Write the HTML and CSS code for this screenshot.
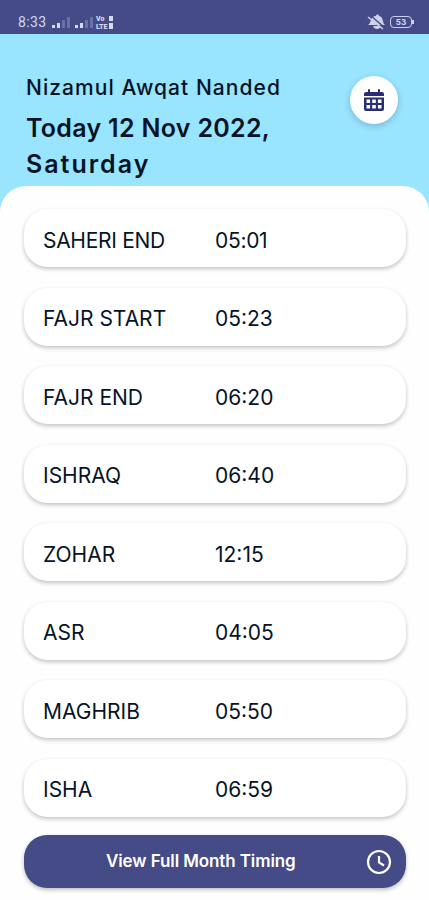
FILE: index.html
```
<!DOCTYPE html>
<html lang="en">

<head>
    <meta charset="UTF-8">
    <meta name="viewport" content="width=device-width, initial-scale=1.0">
    <title>Nizamul Awqat Nanded</title>
    <link rel="stylesheet" href="styles.css">
</head>

<body>
    <div class="status-bar">
        <span class="clock">8:33</span>
        <svg class="signal" width="64" height="16" viewBox="0 0 64 16">
            <g fill="#d5d9f5">
                <rect x="1" y="11" width="3" height="3" />
                <rect x="6" y="9" width="3" height="5" />
                <rect x="24" y="11" width="3" height="3" />
                <rect x="29" y="9" width="3" height="5" />
            </g>
            <g fill="#6a70a8">
                <rect x="11" y="6" width="3" height="8" />
                <rect x="16" y="3" width="3" height="11" />
                <rect x="34" y="6" width="3" height="8" />
                <rect x="39" y="3" width="3" height="11" />
            </g>
            <g fill="#d5d9f5" font-family="Roboto, sans-serif" font-size="7" font-weight="900">
                <text x="45" y="7">Vo</text>
                <text x="45" y="15">LTE</text>
                <rect x="58" y="2" width="4" height="5" />
                <rect x="58" y="9" width="4" height="6" />
            </g>
        </svg>
        <svg class="bell" width="20" height="16" viewBox="0 0 20 16">
            <path d="M1 11C4 10 3 2 9 2C9 0 12 0 12 2C17 3 15 9 18 11H1ZM6 12H14C13 16 7 16 6 12Z" fill="#cdd1ed" />
            <path d="M3 1L18 14" stroke="#454b87" stroke-width="1.4" />
            <path d="M1 3L16 15" stroke="#cdd1ed" stroke-width="1.5" />
        </svg>
        <div class="battery">53</div>
    </div>

    <header>
        <div class="heading">
            <h1>Nizamul Awqat Nanded</h1>
            <h2>Today 12 Nov 2022,<br><span class="day">Saturday</span></h2>
        </div>
        <button class="calendar" aria-label="Calendar">
            <svg width="20" height="22" viewBox="0 0 20 22">
                <path d="M0 7V5Q0 3 2 3H4V1Q4 0 5 0T6 1V3H14V1Q14 0 15 0T16 1V3H18Q20 3 20 5V7Z" fill="#292d78" />
                <path d="M0 8.5H20V20Q20 22 18 22H2Q0 22 0 20Z" fill="#292d78" />
                <path d="M2.5 10.5h3.6v3.6h-3.6zM8.2 10.5h3.6v3.6h-3.6zM13.9 10.5h3.6v3.6h-3.6zM2.5 16h3.6v3.6h-3.6zM8.2 16h3.6v3.6h-3.6zM13.9 16h3.6v3.6h-3.6z" fill="#fff" />
            </svg>
        </button>
    </header>

    <main>
        <ul class="timings">
            <li><span class="name">SAHERI END</span><span class="time">05:01</span></li>
            <li><span class="name">FAJR START</span><span class="time">05:23</span></li>
            <li><span class="name">FAJR END</span><span class="time">06:20</span></li>
            <li><span class="name">ISHRAQ</span><span class="time">06:40</span></li>
            <li><span class="name">ZOHAR</span><span class="time">12:15</span></li>
            <li><span class="name">ASR</span><span class="time">04:05</span></li>
            <li><span class="name">MAGHRIB</span><span class="time">05:50</span></li>
            <li><span class="name">ISHA</span><span class="time">06:59</span></li>
        </ul>
        <button class="month">
            <span>View Full Month Timing</span>
            <svg width="26" height="26" viewBox="0 0 26 26" fill="none" stroke="#fff" stroke-width="2.2">
                <circle cx="13" cy="13" r="11" />
                <path d="M13 7V13.5L18 16.5" />
            </svg>
        </button>
    </main>
</body>

</html>
```
FILE: styles.css
```
* {
    box-sizing: border-box;
}

body {
    margin: 0;
    height: 900px;
    overflow: hidden;
    background-color: #99e4ff;
    font-family: Inter, "Open Sans", sans-serif;
    color: #071426;
}

button {
    border: none;
    padding: 0;
    font-family: inherit;
    cursor: pointer;
}

.status-bar {
    display: flex;
    align-items: center;
    height: 34px;
    padding: 10px 17px 0 18px;
    background-color: #454b87;
    color: #d5d9f5;
}

.clock {
    width: 33px;
    font-family: Roboto, sans-serif;
    font-size: 14px;
    letter-spacing: 0.4px;
}

.bell {
    margin-left: auto;
    margin-right: 3px;
}

.battery {
    position: relative;
    width: 22px;
    height: 12px;
    border: 1px solid #cdd1ed;
    border-radius: 4px;
    font-size: 8px;
    font-weight: 700;
    line-height: 10px;
    text-align: center;
}

.battery::after {
    content: "";
    position: absolute;
    top: 3px;
    right: -3px;
    width: 2px;
    height: 4px;
    background-color: #cdd1ed;
}

header {
    display: flex;
    justify-content: space-between;
    align-items: flex-start;
    height: 152px;
    padding: 38px 31px 0 26px;
}

h1 {
    margin: 0;
    font-size: 21px;
    font-weight: 500;
    line-height: 31px;
    letter-spacing: 1.05px;
    white-space: nowrap;
}

h2 {
    margin: 7px 0 0;
    font-size: 25px;
    font-weight: 600;
    line-height: 36px;
    letter-spacing: 0.3px;
    white-space: nowrap;
}

.day {
    letter-spacing: 2px;
}

.calendar {
    display: flex;
    align-items: center;
    justify-content: center;
    width: 48px;
    height: 48px;
    margin-top: 4px;
    border-radius: 50%;
    background-color: #fff;
    box-shadow: 0 2px 6px rgba(0, 60, 90, 0.25);
}

main {
    height: 714px;
    padding: 23px 23px 0 24px;
    border-radius: 26px 26px 0 0;
    background-color: #fefefe;
}

.timings {
    display: grid;
    gap: 20.5px;
    margin: 0;
    padding: 0;
    list-style: none;
}

.timings li {
    display: flex;
    align-items: center;
    height: 58px;
    padding: 4px 20px 0 19px;
    border-radius: 24px;
    background-color: #fff;
    box-shadow: 0 2px 4px rgba(0, 0, 0, 0.24);
    font-size: 21px;
}

.timings li:first-child {
    letter-spacing: -0.3px;
}

.name {
    width: 172px;
}

.month {
    display: flex;
    align-items: center;
    width: 100%;
    height: 53px;
    margin-top: 18.5px;
    padding: 0 14px 0 82px;
    border-radius: 23px;
    background-color: #454b87;
    box-shadow: 0 2px 4px rgba(0, 0, 0, 0.25);
    color: #fff;
    font-size: 17px;
    font-weight: 600;
    letter-spacing: -0.1px;
}

.month span {
    margin-bottom: 2px;
}

.month svg {
    margin-left: auto;
}
```
